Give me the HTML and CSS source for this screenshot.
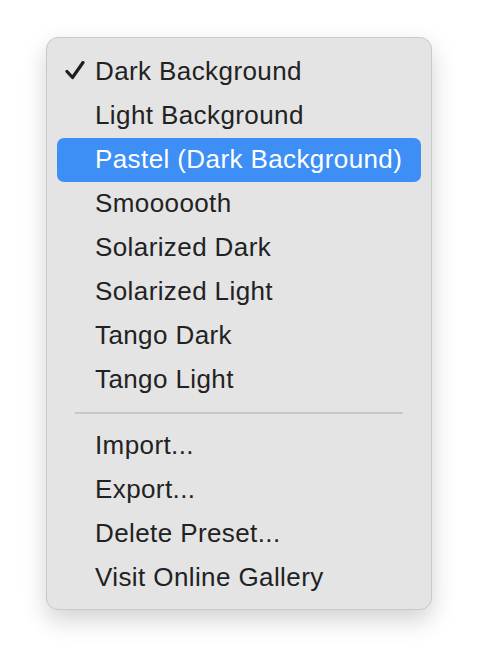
FILE: index.html
```html
<!DOCTYPE html>
<html>
<head>
<meta charset="utf-8">
<link rel="stylesheet" href="styles.css">
</head>
<body>
<div class="menu">
  <div class="item"><svg class="check" viewBox="0 0 20 20" width="20" height="20"><path d="M2 10.5 L7.5 16.5 L18 1.5" fill="none" stroke="#1f1f1f" stroke-width="3.2" stroke-linecap="round" stroke-linejoin="round"/></svg>Dark Background</div>
  <div class="item">Light Background</div>
  <div class="item selected">Pastel (Dark Background)</div>
  <div class="item">Smoooooth</div>
  <div class="item">Solarized Dark</div>
  <div class="item">Solarized Light</div>
  <div class="item">Tango Dark</div>
  <div class="item">Tango Light</div>
  <div class="sep"></div>
  <div class="item">Import...</div>
  <div class="item">Export...</div>
  <div class="item">Delete Preset...</div>
  <div class="item">Visit Online Gallery</div>
</div>
</body>
</html>
```
FILE: styles.css
```css
html, body { margin: 0; padding: 0; background: #ffffff; }
body { width: 478px; height: 662px; }
.menu {
  margin: 37px 0 0 46px;
  width: 386px;
  box-sizing: border-box;
  padding: 12px 10px 9px;
  background: #e4e4e4;
  border: 1px solid #c9c9c9;
  border-radius: 12px;
  box-shadow: 0 10px 24px rgba(0,0,0,0.18);
  font-family: "Liberation Sans", Arial, sans-serif;
  font-size: 26px;
  letter-spacing: 0.4px;
  color: #222222;
}
.item {
  position: relative;
  height: 44px;
  box-sizing: border-box;
  line-height: 42px;
  padding-left: 38px;
  padding-bottom: 2px;
  border-radius: 7px;
  white-space: nowrap;
}
.item.selected { background: #3d8ef5; color: #ffffff; }
.check { position: absolute; left: 8px; top: 11px; }
.sep { height: 22px; display: flex; align-items: center; padding: 0 18px; }
.sep::before { content: ""; flex: 1; height: 2px; background: #c8c8c8; }
```
